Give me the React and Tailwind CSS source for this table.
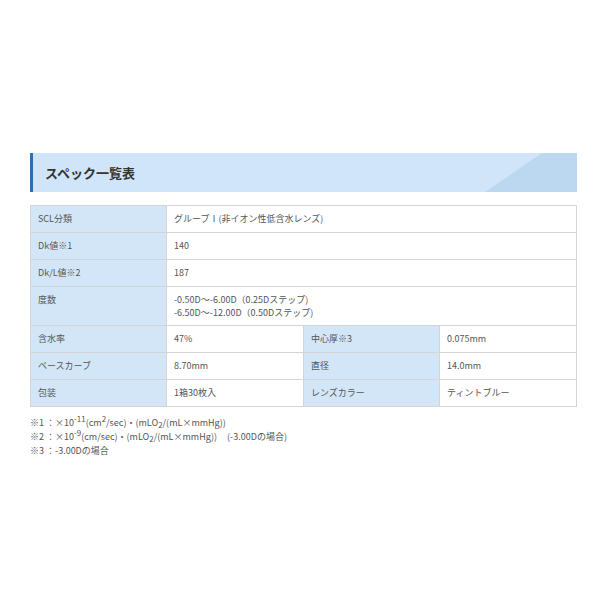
import React from "react";

const font = { fontFamily: '"Noto Sans CJK JP", "Noto Sans", sans-serif' };

const Label = ({ children, className = "" }) => (
  <td className={`border border-[#d4d4d4] bg-[#d3e6f8] px-[7px] py-[6px] align-top ${className}`}>
    {children}
  </td>
);

const Value = ({ children, colSpan, className = "" }) => (
  <td colSpan={colSpan} className={`border border-[#d4d4d4] bg-white px-[7px] py-[6px] align-top ${className}`}>
    {children}
  </td>
);

export default function App() {
  return (
    <div className="w-[600px] h-[600px] bg-white text-[#555]" style={font}>
      <div className="pt-[153px] px-[30px] pr-[23px]">
        <div className="relative h-[39px] bg-[#d0e5f9] border-l-[3px] border-[#2f6fae] flex items-center pl-[12px]">
          <svg className="absolute right-0 top-0 h-full" width="92" height="39" viewBox="0 0 92 39" preserveAspectRatio="none">
            <polygon points="57,0 92,0 92,39 0,39" fill="#bcd7f0" />
          </svg>
          <h2 className="relative text-[13px] font-bold text-[#333]">スペック一覧表</h2>
        </div>
      </div>

      <div className="px-[30px] pt-[13px] pr-[24px]">
        <table className="w-[546px] border-collapse text-[9px] leading-[13px] table-fixed">
          <colgroup>
            <col className="w-[136px]" />
            <col className="w-[137px]" />
            <col className="w-[136px]" />
            <col className="w-[137px]" />
          </colgroup>
          <tbody>
            <tr className="h-[27px]">
              <Label>SCL分類</Label>
              <Value colSpan={3}>グループⅠ(非イオン性低含水レンズ)</Value>
            </tr>
            <tr className="h-[27px]">
              <Label>Dk値※1</Label>
              <Value colSpan={3}>140</Value>
            </tr>
            <tr className="h-[27px]">
              <Label>Dk/L値※2</Label>
              <Value colSpan={3}>187</Value>
            </tr>
            <tr className="h-[39px]">
              <Label>度数</Label>
              <Value colSpan={3}>
                -0.50D～-6.00D（0.25Dステップ)
                <br />
                -6.50D～-12.00D（0.50Dステップ)
              </Value>
            </tr>
            <tr className="h-[27px]">
              <Label>含水率</Label>
              <Value>47%</Value>
              <Label>中心厚※3</Label>
              <Value>0.075mm</Value>
            </tr>
            <tr className="h-[27px]">
              <Label>ベースカーブ</Label>
              <Value>8.70mm</Value>
              <Label>直径</Label>
              <Value>14.0mm</Value>
            </tr>
            <tr className="h-[27px]">
              <Label>包装</Label>
              <Value>1箱30枚入</Value>
              <Label>レンズカラー</Label>
              <Value>ティントブルー</Value>
            </tr>
          </tbody>
        </table>

        <div className="pt-[9px] text-[9px] leading-[14px] text-[#555]">
          <p>
            ※1 ：×10<sup className="text-[8px]">-11</sup>(cm<sup className="text-[8px]">2</sup>/sec)・(mLO<sub className="text-[8px]">2</sub>/(mL×mmHg))
          </p>
          <p>
            ※2 ：×10<sup className="text-[8px]">-9</sup>(cm/sec)・(mLO<sub className="text-[8px]">2</sub>/(mL×mmHg))
            <span className="pl-[10px]">(-3.00Dの場合)</span>
          </p>
          <p>※3 ：-3.00Dの場合</p>
        </div>
      </div>
    </div>
  );
}
